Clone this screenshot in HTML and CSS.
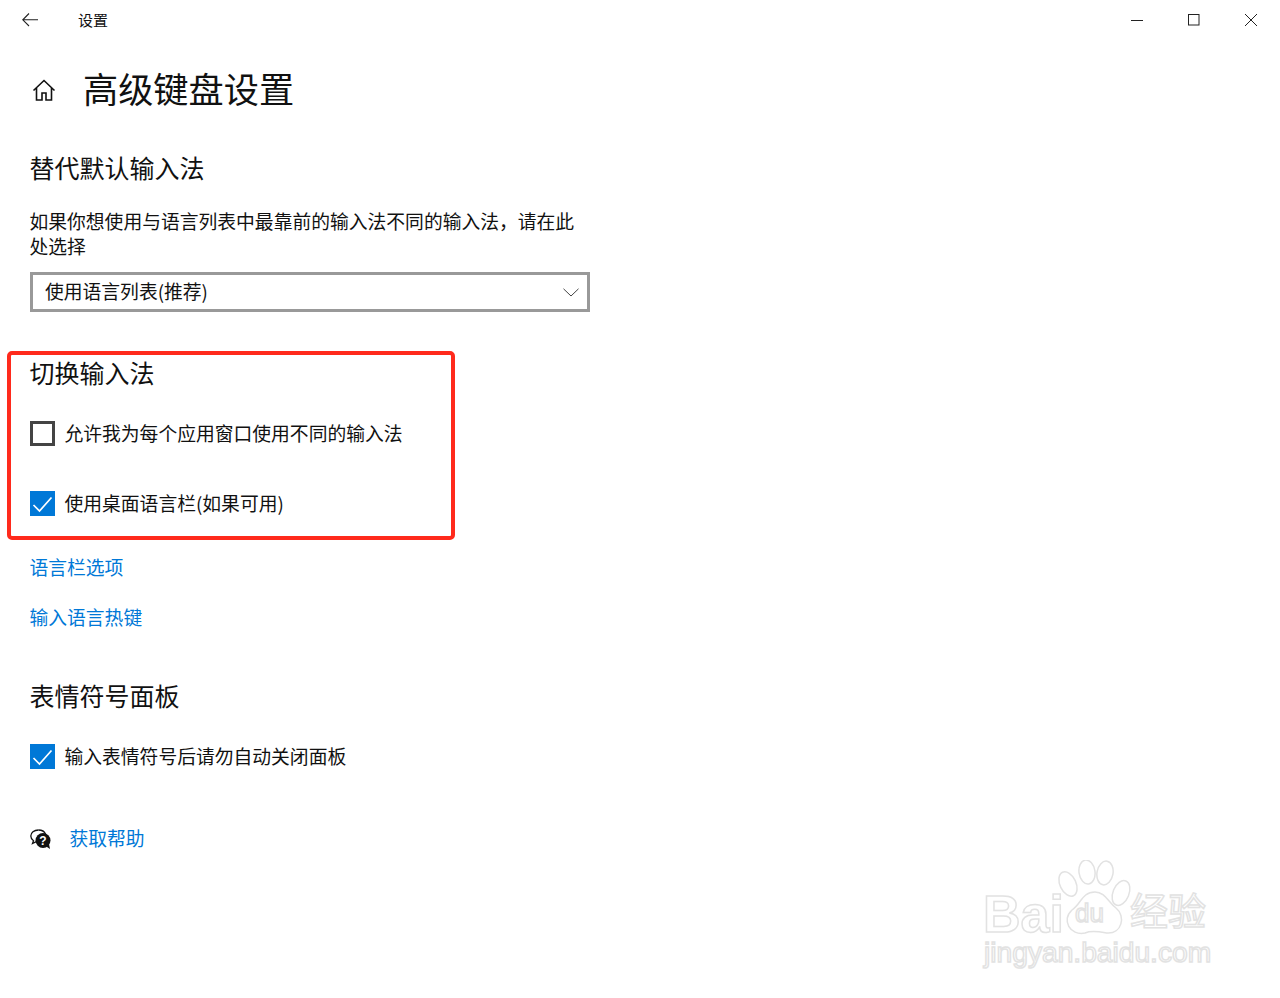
FILE: index.html
```html
<!DOCTYPE html>
<html lang="zh-CN">
<head>
  <meta charset="UTF-8">
  <title>设置</title>
  <link rel="stylesheet" href="styles.css">
</head>
<body>

  <div class="titlebar">
    <svg class="back-icon" width="16" height="14" viewBox="0 0 16 14"><path d="M7 .5 .8 6.800 7 13M1 6.800h15" fill="none" stroke="#222" stroke-width="1.100"/></svg>
    <span class="app-name">设置</span>
    <div class="win-controls">
      <svg width="12" height="12" viewBox="0 0 12 12"><path d="M0 6.500h12" stroke="#222" stroke-width="1"/></svg>
      <svg width="12" height="12" viewBox="0 0 12 12"><rect x=".5" y=".5" width="10.500" height="10.500" fill="none" stroke="#222" stroke-width="1"/></svg>
      <svg width="12" height="12" viewBox="0 0 12 12"><path d="M0 0 12 12M12 0 0 12" stroke="#222" stroke-width="1"/></svg>
    </div>
  </div>

  <div class="main">
    <div class="page-title">
      <svg class="home-icon" width="24" height="24" viewBox="0 0 24 24"><path d="M1.500 12.500 12 2.500l10.500 10M4.500 9.800V22h5.500v-7h4v7h5.500V9.800" fill="none" stroke="#111" stroke-width="1.600"/></svg>
      <h1>高级键盘设置</h1>
    </div>

    <h2 class="sec-first">替代默认输入法</h2>
    <p class="desc">如果你想使用与语言列表中最靠前的输入法不同的输入法，请在此<br>处选择</p>
    <div class="select-box">
      <span class="lift">使用语言列表(推荐)</span>
      <svg width="16" height="9" viewBox="0 0 16 9"><path d="M.5 .8 8 8 15.500 .8" fill="none" stroke="#444" stroke-width="1"/></svg>
    </div>

    <h2 class="sec">切换输入法</h2>
    <div class="check-row first">
      <span class="check"></span>
      <span class="lift">允许我为每个应用窗口使用不同的输入法</span>
    </div>
    <div class="check-row second">
      <span class="check on"><svg width="25" height="25" viewBox="0 0 25 25"><path d="M3.500 14 9.500 20 21.500 6.500" fill="none" stroke="#fff" stroke-width="1.700"/></svg></span>
      <span class="lift">使用桌面语言栏(如果可用)</span>
    </div>

    <a class="link link-a">语言栏选项</a>
    <a class="link link-b">输入语言热键</a>

    <h2 class="sec-emoji">表情符号面板</h2>
    <div class="check-row first">
      <span class="check on"><svg width="25" height="25" viewBox="0 0 25 25"><path d="M3.500 14 9.500 20 21.500 6.500" fill="none" stroke="#fff" stroke-width="1.700"/></svg></span>
      <span class="lift">输入表情符号后请勿自动关闭面板</span>
    </div>

    <div class="help-row">
      <svg width="22" height="21" viewBox="0 0 22 21">
        <path d="M8.500 1C4 1 .8 3.600 .8 7c0 2 1.100 3.600 2.700 4.700L2.500 14.500l3.800-1.800" fill="#fff" stroke="#111" stroke-width="1.300"/>
        <path d="M8.500 1c3.500 0 6 1.600 7 4" fill="none" stroke="#111" stroke-width="1.300"/>
        <circle cx="13" cy="11.500" r="7.500" fill="#111"/>
        <path d="M15.500 17l4.500 3-1-5z" fill="#111"/>
        <text x="13" y="15.500" class="help-q">?</text>
      </svg>
      <a class="link-inline lift">获取帮助</a>
    </div>
  </div>

  <div class="red-box"></div>

  <div class="watermark">
    <svg class="paw" width="92" height="82" viewBox="0 0 92 82">
      <g fill="#fff" stroke="#e2e2e2" stroke-width="1.500">
        <ellipse cx="18" cy="24" rx="8" ry="13" transform="rotate(-25 18 24)"/>
        <ellipse cx="37" cy="12" rx="8" ry="12" transform="rotate(-8 37 12)"/>
        <ellipse cx="55" cy="13" rx="8" ry="12" transform="rotate(10 55 13)"/>
        <ellipse cx="71" cy="33" rx="8" ry="13" transform="rotate(22 71 33)"/>
        <path d="M45 32c10 0 13 10 21 16 10 8 6 26-9 25-6-1-15-3-22 0-15 3-24-13-13-23 9-6 10-18 23-18z"/>
      </g>
    </svg>
    <span class="wm-word wm-bai">Bai</span>
    <span class="wm-word wm-du">du</span>
    <span class="wm-word wm-cn">经验</span>
    <span class="wm-word wm-url">jingyan.baidu.com</span>
  </div>

</body>
</html>
```

FILE: styles.css
```css
body {
  margin: 0;
  background: #fff;
  color: #111;
  font-family: "Noto Sans CJK SC", "Liberation Sans", sans-serif;
  font-size: 18.800px;
  height: 998px;
  overflow: hidden;
  position: relative;
}

.titlebar {
  height: 40px;
  display: flex;
  align-items: center;
  position: relative;
}

.back-icon {
  margin-left: 22px;
  margin-top: -1px;
}

.app-name {
  margin-left: 40px;
  padding-bottom: 2px;
  font-size: 15px;
}

.win-controls {
  margin-left: auto;
  margin-right: 23px;
  display: flex;
  gap: 45px;
}

.main {
  padding: 25px 0 0 30px;
}

.page-title {
  display: flex;
  align-items: center;
  height: 50px;
}

.home-icon {
  margin-left: 2px;
}

.page-title h1 {
  margin: 0 0 5px 27px;
  font-size: 35.200px;
  font-weight: 400;
  line-height: 45px;
}

h2 {
  font-size: 25px;
  font-weight: 400;
  line-height: 34px;
  padding-bottom: 2px;
  margin: 0 0 0 -0.500px;
}

.sec-first { margin-top: 35px; }
.sec { margin-top: 43px; }
.sec-emoji { margin-top: 48px; }

.desc {
  margin: 22px 0 0 -0.500px;
  padding-bottom: 2px;
  line-height: 25px;
}

.select-box {
  box-sizing: border-box;
  width: 560px;
  height: 40px;
  margin-top: 12px;
  border: 3px solid #999;
  display: flex;
  align-items: center;
  justify-content: space-between;
  padding: 0 8px 0 12px;
}

.lift {
  padding-bottom: 3px;
}

.check-row {
  display: flex;
  align-items: center;
  height: 25px;
  gap: 9.500px;
}

.check-row.first { margin-top: 30px; }
.check-row.second { margin-top: 45px; }

.check {
  box-sizing: border-box;
  width: 25px;
  height: 25px;
  border: 3px solid #444;
  flex: none;
}

.check.on {
  border: 0;
  background: #0078d7;
}

.check svg {
  display: block;
}

.link {
  display: block;
  margin-left: -0.500px;
  color: #0078d7;
  line-height: 26px;
}

.link-a { margin-top: 38px; }
.link-b { margin-top: 24px; }

.help-row {
  display: flex;
  align-items: center;
  height: 26px;
  margin-top: 57px;
  gap: 17.500px;
}

.link-inline {
  color: #0078d7;
}

.help-q {
  fill: #fff;
  font-family: "Liberation Sans", sans-serif;
  font-size: 12px;
  font-weight: 700;
  text-anchor: middle;
}

.red-box {
  position: absolute;
  left: 7px;
  top: 351px;
  width: 440px;
  height: 181px;
  border: 4px solid #ff2a1c;
  border-radius: 5px;
}

.watermark {
  position: absolute;
  left: 960px;
  top: 850px;
  width: 270px;
  height: 130px;
}

.paw {
  position: absolute;
  left: 90px;
  top: 10px;
}

.wm-word {
  position: absolute;
  color: #fff;
  -webkit-text-stroke: 1.500px #e2e2e2;
  font-family: "Liberation Sans", sans-serif;
  line-height: 1;
}

.wm-bai {
  left: 23px;
  top: 41px;
  font-size: 52px;
  line-height: 46px;
  font-weight: 700;
}

.wm-du {
  left: 115px;
  top: 50px;
  font-size: 26px;
}

.wm-cn {
  left: 170px;
  top: 40px;
  font-size: 38px;
  font-family: "Noto Sans CJK SC", sans-serif;
}

.wm-url {
  left: 24px;
  top: 88px;
  font-size: 28.200px;
}
```
